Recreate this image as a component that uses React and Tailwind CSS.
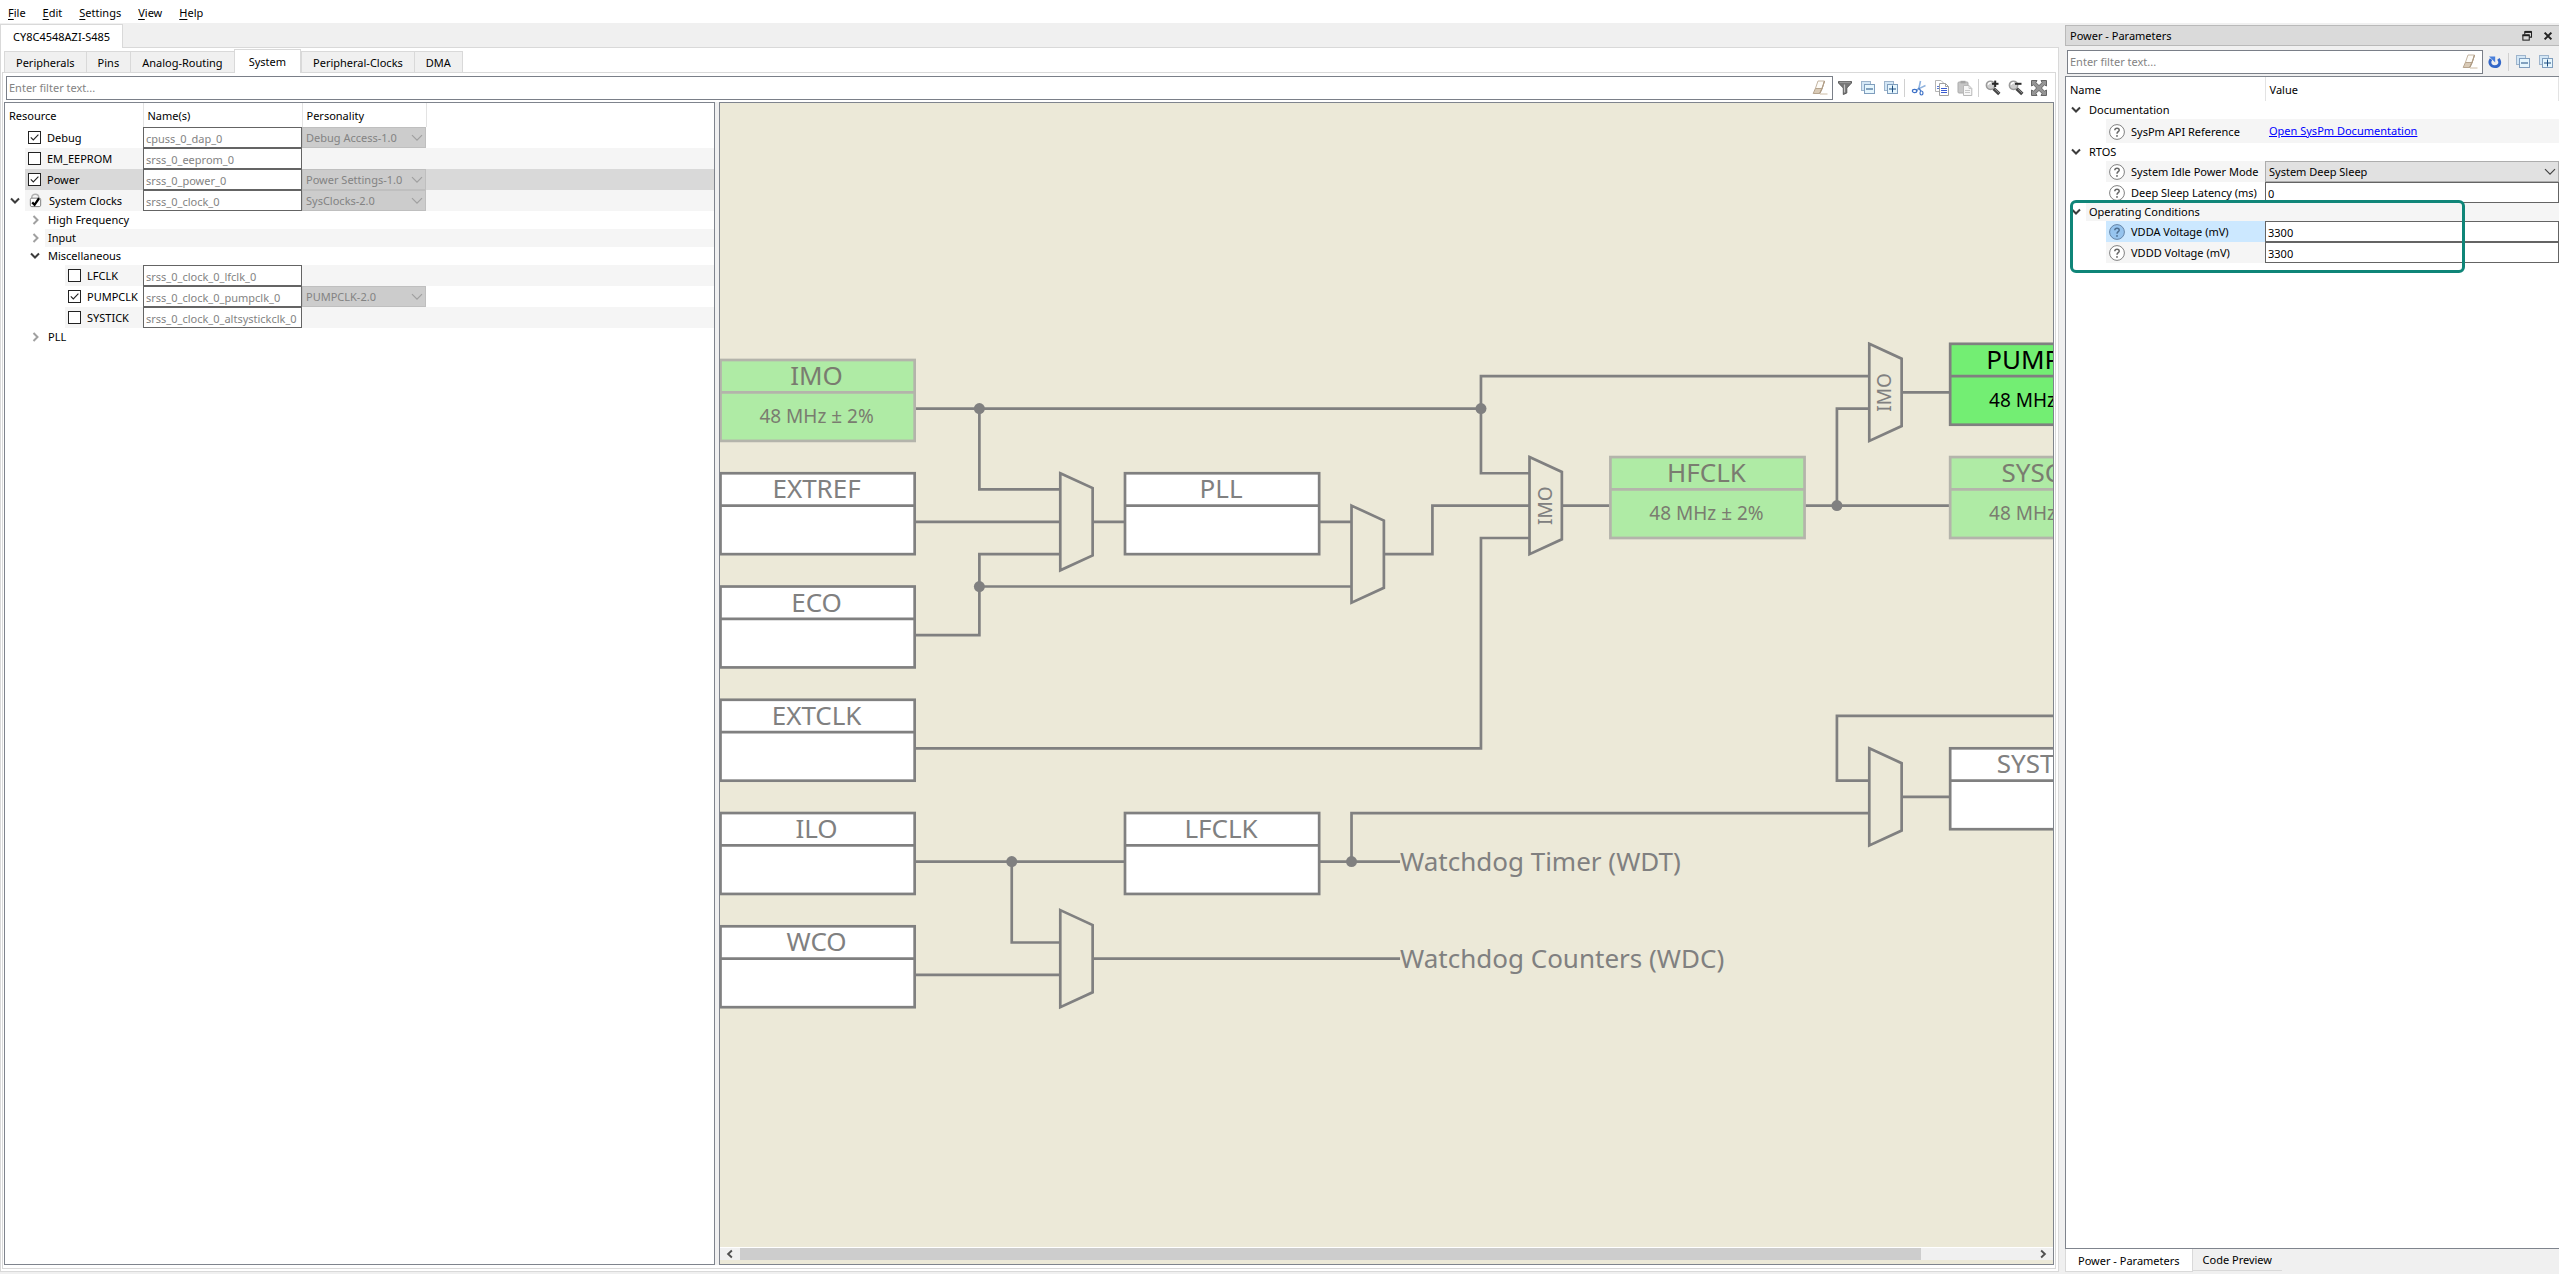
import { useState } from "react";
import clsx from "clsx";

const MENUS = ["File", "Edit", "Settings", "View", "Help"];
const PAGES = ["Peripherals", "Pins", "Analog-Routing", "System", "Peripheral-Clocks", "DMA"];

const RESOURCES = [
  { id: "debug", label: "Debug", checked: true, name: "cpuss_0_dap_0", personality: "Debug Access-1.0" },
  { id: "eeprom", label: "EM_EEPROM", name: "srss_0_eeprom_0" },
  { id: "power", label: "Power", checked: true, name: "srss_0_power_0", personality: "Power Settings-1.0", selected: true },
  { id: "clocks", label: "System Clocks", locked: true, open: true, name: "srss_0_clock_0", personality: "SysClocks-2.0" },
  { id: "hf", label: "High Frequency", group: true },
  { id: "input", label: "Input", group: true },
  { id: "misc", label: "Miscellaneous", group: true, open: true },
  { id: "lfclk", label: "LFCLK", depth: 2, name: "srss_0_clock_0_lfclk_0" },
  { id: "pumpclk", label: "PUMPCLK", depth: 2, checked: true, name: "srss_0_clock_0_pumpclk_0", personality: "PUMPCLK-2.0" },
  { id: "systick", label: "SYSTICK", depth: 2, name: "srss_0_clock_0_altsystickclk_0" },
  { id: "pll", label: "PLL", group: true },
];

const PARAMETERS = [
  { id: "doc", label: "Documentation", group: true },
  { id: "api", label: "SysPm API Reference", link: "Open SysPm Documentation" },
  { id: "rtos", label: "RTOS", group: true },
  { id: "idle", label: "System Idle Power Mode", select: "System Deep Sleep" },
  { id: "latency", label: "Deep Sleep Latency (ms)", value: "0" },
  { id: "cond", label: "Operating Conditions", group: true },
  { id: "vdda", label: "VDDA Voltage (mV)", value: "3300", selected: true },
  { id: "vddd", label: "VDDD Voltage (mV)", value: "3300" },
];

/* ---------- icons ---------- */

function Icon({ children, className = "size-4" }) {
  return (
    <svg viewBox="0 0 16 16" className={clsx("shrink-0", className)} fill="none" aria-hidden="true">
      {children}
    </svg>
  );
}

function TreeArrow({ open }) {
  return (
    <Icon>
      {open ? (
        <path d="M4 5.5L8 9.5L12 5.5" stroke="#3c3c3c" strokeWidth="2" />
      ) : (
        <path d="M6.5 4L10.5 8L6.5 12" stroke="#a0a0a0" strokeWidth="2" />
      )}
    </Icon>
  );
}

function EraserIcon() {
  return (
    <Icon>
      <path d="M6 1H12.5L10.2 8.5H3.4Z" fill="#fdfbf7" stroke="#c4b5a2" />
      <path d="M3.4 8.5H10.2L7.6 13.5H1.2Z" fill="#d9cab6" stroke="#b7a58f" />
      <path d="M7.8 13.5L10.2 8.5L12.5 1L11 5.5Z" stroke="#b09d86" />
      <path d="M8 14H15.5" stroke="#cdbca5" />
    </Icon>
  );
}

function FunnelIcon() {
  return (
    <Icon>
      <path d="M1.5 1.5H14.5V3L9.8 8V13L6.3 14.5V8L1.5 3Z" fill="#777" stroke="#5a5a5a" />
      <path d="M2.5 2.2H13.5" stroke="#a8a8a8" />
      <path d="M7.5 4.5V12.5" stroke="#c4c4c4" strokeWidth="1.2" />
    </Icon>
  );
}

function StackIcon({ plus }) {
  return (
    <Icon>
      <rect x="1.5" y="1.5" width="9" height="9" fill="#d3e6f5" stroke="#9db4cc" />
      <rect x="4.5" y="4.5" width="10" height="9" fill="#e6f6fd" stroke="#7f9dbd" />
      <path d="M6 9H13" stroke="#1c4c80" />
      {plus && <path d="M9.5 5.5V12.5" stroke="#1c4c80" />}
    </Icon>
  );
}

function ScissorsIcon() {
  return (
    <Icon>
      <path d="M9.5 1L8 8L5.5 11" stroke="#8db2e0" strokeWidth="1.6" />
      <path d="M14.5 5.5L8 8.5L5 10.5" stroke="#8fb2dd" strokeWidth="1.4" />
      <path d="M7.5 8L10 11" stroke="#4a7cca" strokeWidth="1.3" />
      <ellipse cx="3.6" cy="11" rx="2.2" ry="1.6" stroke="#3c70c6" strokeWidth="1.2" />
      <ellipse cx="10.5" cy="13" rx="1.5" ry="2" stroke="#3c70c6" strokeWidth="1.2" />
    </Icon>
  );
}

function CopyIcon() {
  return (
    <Icon>
      <path d="M1.5 .5H7L9.5 3V11.5H1.5Z" fill="#fff" stroke="#b5b5b5" />
      <path d="M3 6.5H5M3 8.5H5" stroke="#5577d4" />
      <path d="M5.5 3.5H11.5L14.5 6.5V15.5H5.5Z" fill="#fff" stroke="#a0a0a0" />
      <path d="M11.5 3.5V6.5H14.5" stroke="#a0a0a0" />
      <path d="M7 8.5H13M7 10.5H13M7 12.5H13" stroke="#3a5bd0" />
    </Icon>
  );
}

function PasteIcon() {
  return (
    <Icon>
      <rect x="1" y="2" width="10" height="11" rx="1" fill="#c6c6c6" stroke="#ababab" />
      <rect x="3.5" y=".8" width="5" height="2.6" fill="#a5a5a5" />
      <path d="M6.5 5.5H12L14.8 8.5V15.5H6.5Z" fill="#f7f7f7" stroke="#b8b8b8" />
      <path d="M12 5.5V8.5H14.8M8 10.5H13M8 12.5H13" stroke="#c8c8c8" />
    </Icon>
  );
}

function MagnifierIcon({ plus }) {
  return (
    <Icon>
      <path d="M8.5 8.5L14.3 14" stroke="#444" strokeWidth="3.4" />
      <path d="M9.8 9L14 13" stroke="#8d8d8d" />
      <circle cx="5.5" cy="5.3" r="4.2" fill="#cdcdcd" stroke="#9a9a9a" strokeWidth="1.4" />
      <path d="M3 4.6Q4 2.6 6 2.8" stroke="#fff" strokeWidth="1.4" />
      <path d="M7 3.8H13.5" stroke="#2a2a2a" strokeWidth="2" />
      {plus && <path d="M10.2 .6V7" stroke="#2a2a2a" strokeWidth="2" />}
    </Icon>
  );
}

function FitIcon() {
  return (
    <Icon>
      <path
        d="M.5 .5H6L4.8 2.6L8 5.6L11.2 2.6L10 .5H15.5V6L13.4 4.8L10.4 8L13.4 11.2L15.5 10V15.5H10L11.2 13.4L8 10.4L4.8 13.4L6 15.5H.5V10L2.6 11.2L5.6 8L2.6 4.8L.5 6Z"
        fill="#959595"
        stroke="#666"
      />
    </Icon>
  );
}

function ResetIcon() {
  return (
    <Icon>
      <path d="M4 5.2C1.2 9 4 12.7 8 12.7C12.4 12.7 14.2 8.6 11.4 4.8" stroke="#3468c8" strokeWidth="2.8" />
      <path d="M2 2.4H8.2V8.4Z" fill="#4a80dc" />
    </Icon>
  );
}

function HelpIcon({ active }) {
  return (
    <Icon>
      <circle cx="8" cy="8" r="7.4" fill={active ? "#96c4ee" : "#fff"} stroke={active ? "#6686a8" : "#808080"} />
      <path d="M5.8 6.3C5.8 3.4 10.3 3.5 10.2 6.2C10.1 7.7 8 7.8 8 9.8" stroke={active ? "#4d6f92" : "#666"} strokeWidth="1.5" />
      <circle cx="8" cy="11.9" r=".95" fill={active ? "#4d6f92" : "#666"} />
    </Icon>
  );
}

function LockCheckIcon() {
  return (
    <Icon className="size-[15px]">
      <path d="M4 6.5V5C4 .2 11.5 .2 11.5 5V6.5" stroke="#b0b0b0" strokeWidth="1.5" />
      <rect x="2.5" y="5.5" width="11" height="9" rx="1.5" fill="#fff" stroke="#777" />
      <path d="M4.5 10L7 12.6L11.8 5.6" stroke="#000" strokeWidth="2.4" />
    </Icon>
  );
}

/* ---------- small controls ---------- */

function ToolButton({ label, children }) {
  return (
    <button type="button" aria-label={label} title={label} className="flex h-6 w-[23px] items-center justify-center">
      {children}
    </button>
  );
}

function Separator() {
  return <div className="mx-[2px] h-[18px] w-px bg-[#d0d0d0]" />;
}

function FilterBox({ id }) {
  return (
    <div className="flex h-6 min-w-0 flex-1 items-center border border-[#7a7f88] bg-white pr-1 pl-[2px]">
      <input
        id={id}
        type="text"
        aria-label="Filter"
        placeholder="Enter filter text..."
        className="min-w-0 flex-1 bg-transparent outline-none placeholder:text-[#838383]"
      />
      <button type="button" aria-label="Clear filter" className="flex">
        <EraserIcon />
      </button>
    </div>
  );
}

function CheckBox({ id, defaultChecked }) {
  return (
    <span className="relative mr-[6px] ml-[3px] size-[13px] shrink-0">
      <input
        id={id}
        type="checkbox"
        defaultChecked={defaultChecked}
        className="peer block size-[13px] appearance-none border border-[#222] bg-white"
      />
      <svg
        viewBox="0 0 13 13"
        className="pointer-events-none absolute inset-0 hidden size-[13px] peer-checked:block"
        fill="none"
        aria-hidden="true"
      >
        <path d="M2.8 6.4L5.3 9L10.4 3.6" stroke="#222" strokeWidth="1.1" />
      </svg>
    </span>
  );
}

function Combo({ id, label, value, disabled }) {
  return (
    <div className="relative h-[21px]">
      <select
        id={id}
        aria-label={label}
        disabled={disabled}
        className={clsx(
          "block h-[21px] w-full appearance-none border pl-[3px] outline-none",
          disabled ? "border-[#bfbfbf] bg-[#cccccc] text-[#838383] opacity-100" : "border-[#adadad] bg-[#e1e1e1] text-black"
        )}
      >
        <option>{value}</option>
      </select>
      <svg viewBox="0 0 12 8" className="pointer-events-none absolute top-[7px] right-[3px] h-2 w-3" fill="none" aria-hidden="true">
        <path d="M1 1.2L6 6.2L11 1.2" stroke={disabled ? "#a0a0a0" : "#444"} strokeWidth="1.2" />
      </svg>
    </div>
  );
}

/* ---------- resource tree ---------- */

function ResourceRow({ row, striped }) {
  const bg = row.selected ? "bg-[#d9d9d9]" : striped ? "bg-[#f5f5f5]" : "bg-white";
  return (
    <tr className={row.group ? "h-[18px]" : "h-[21px]"}>
      <td className="p-0">
        <div className={clsx("flex", row.group ? "h-[18px]" : "h-[21px]")}>
          {/* indentation stays white, the stripe starts after it */}
          <div
            className={clsx(
              "flex shrink-0 items-center justify-end pr-[2px]",
              row.depth === 2 ? "w-[60px]" : row.group ? "w-10" : "w-5"
            )}
          >
            {(row.group || row.locked) && <TreeArrow open={row.open} />}
          </div>
          <div className={clsx("flex flex-1 items-center whitespace-nowrap", bg)}>
            {row.group && <span className="pl-[3px]">{row.label}</span>}
            {row.locked && (
              <span className="flex items-center gap-[6px] pl-[3px]">
                <LockCheckIcon />
                {row.label}
              </span>
            )}
            {!row.group && !row.locked && (
              <>
                <CheckBox id={row.id} defaultChecked={row.checked} />
                <label htmlFor={row.id}>{row.label}</label>
              </>
            )}
          </div>
        </div>
      </td>
      <td className={clsx("p-0", bg)}>
        {row.name && (
          <input
            type="text"
            aria-label={`${row.label} name`}
            defaultValue={row.name}
            className="block h-[21px] w-full border border-[#646464] bg-white pt-px pl-[2px] text-[#838383] outline-none"
          />
        )}
      </td>
      <td className={clsx("p-0", bg)}>
        {row.personality && <Combo label={`${row.label} personality`} value={row.personality} disabled />}
      </td>
      <td className={clsx("p-0", bg)} />
    </tr>
  );
}

function ResourceTree() {
  return (
    <div className="w-[711px] shrink-0 border border-[#7f848d] bg-white">
      <table className="w-full table-fixed border-collapse">
        <colgroup>
          <col className="w-[138px]" />
          <col className="w-[159px]" />
          <col className="w-[124px]" />
          <col />
        </colgroup>
        <thead>
          <tr className="h-6 text-left">
            <th className="border-r border-[#e3e3e3] p-0 pt-[2px] pl-1 font-normal">Resource</th>
            <th className="border-r border-[#e3e3e3] p-0 pt-[2px] pl-1 font-normal">Name(s)</th>
            <th className="border-r border-[#e3e3e3] p-0 pt-[2px] pl-1 font-normal">Personality</th>
            <th className="p-0" />
          </tr>
        </thead>
        <tbody>
          {RESOURCES.map((row, i) => (
            <ResourceRow key={row.id} row={row} striped={i % 2 === 1} />
          ))}
        </tbody>
      </table>
    </div>
  );
}

/* ---------- clock diagram ---------- */

// one grid cell of the schematic, and where its first row starts
const CELL = 32.36;
const TOP = 257;
const gx = (n) => n * CELL + 0.5;
const gy = (n) => n * CELL + TOP;

const BLOCKS = [
  { x: 0, y: 0, title: "IMO", value: "48 MHz ± 2%", kind: "on" },
  { x: 0, y: 3.5, title: "EXTREF" },
  { x: 0, y: 7, title: "ECO" },
  { x: 0, y: 10.5, title: "EXTCLK" },
  { x: 0, y: 14, title: "ILO" },
  { x: 0, y: 17.5, title: "WCO" },
  { x: 12.5, y: 3.5, title: "PLL" },
  { x: 12.5, y: 14, title: "LFCLK" },
  { x: 27.5, y: 3, title: "HFCLK", value: "48 MHz ± 2%", kind: "on" },
  { x: 38, y: -0.5, title: "PUMPCLK", value: "48 MHz ± 2%", kind: "active" },
  { x: 38, y: 3, title: "SYSCLK", value: "48 MHz ± 2%", kind: "on" },
  { x: 38, y: 12, title: "SYSTICK" },
];

const MUXES = [
  { x: 10.5, y: 3.5 },
  { x: 19.5, y: 4.5 },
  { x: 25, y: 3, label: "IMO" },
  { x: 35.5, y: -0.5, label: "IMO" },
  { x: 35.5, y: 12 },
  { x: 10.5, y: 17 },
];

const WIRES = [
  [[6, 1.5], [23.5, 1.5]],
  [[8, 1.5], [8, 4], [10.5, 4]],
  [[6, 5], [10.5, 5]],
  [[6, 8.5], [8, 8.5], [8, 6], [10.5, 6]],
  [[8, 7], [19.5, 7]],
  [[11.5, 5], [12.5, 5]],
  [[18.5, 5], [19.5, 5]],
  [[20.5, 6], [22, 6], [22, 4.5], [25, 4.5]],
  [[35.5, 0.5], [23.5, 0.5], [23.5, 3.5], [25, 3.5]],
  [[6, 12], [23.5, 12], [23.5, 5.5], [25, 5.5]],
  [[26, 4.5], [27.5, 4.5]],
  [[33.5, 4.5], [38, 4.5]],
  [[34.5, 4.5], [34.5, 1.5], [35.5, 1.5]],
  [[36.5, 1], [38, 1]],
  [[6, 15.5], [12.5, 15.5]],
  [[9, 15.5], [9, 18], [10.5, 18]],
  [[6, 19], [10.5, 19]],
  [[11.5, 18.5], [21, 18.5]],
  [[18.5, 15.5], [21, 15.5]],
  [[19.5, 15.5], [19.5, 14], [35.5, 14]],
  [[44, 11], [34.5, 11], [34.5, 13], [35.5, 13]],
  [[36.5, 13.5], [38, 13.5]],
];

const NODES = [[8, 1.5], [23.5, 1.5], [8, 7], [34.5, 4.5], [9, 15.5], [19.5, 15.5]];

const KINDS = {
  off: { fill: "#ffffff", stroke: "#808080", text: "#808080" },
  on: { fill: "#afeba5", stroke: "#b4b4ab", text: "#7a7c70" },
  active: { fill: "#73ee73", stroke: "#808080", text: "#000000" },
};

function Block({ x, y, title, value, kind = "off" }) {
  const c = KINDS[kind];
  return (
    <g>
      <rect x={gx(x)} y={gy(y)} width={CELL * 6} height={CELL * 2.5} fill={c.fill} stroke={c.stroke} strokeWidth="2.7" />
      <path d={`M${gx(x)} ${gy(y + 1)}H${gx(x + 6)}`} stroke={c.stroke} strokeWidth="2.7" />
      <text x={gx(x + 3) - 1} y={gy(y) + 25} textAnchor="middle" fill={c.text} className="text-[26px]">
        {title}
      </text>
      {value && (
        <text x={gx(x + 3) - 1} y={gy(y) + 63} textAnchor="middle" fill={c.text} className="text-[19px]">
          {value}
        </text>
      )}
    </g>
  );
}

function Mux({ x, y, label }) {
  const cx = gx(x + 0.5) + 6;
  const cy = gy(y + 1.5);
  return (
    <g>
      <path
        d={`M${gx(x)} ${gy(y)}L${gx(x + 1)} ${gy(y + 0.46)}V${gy(y + 2.54)}L${gx(x)} ${gy(y + 3)}Z`}
        stroke="#808080"
        strokeWidth="2.7"
        fill="none"
      />
      {label && (
        <text x={cx} y={cy} transform={`rotate(-90 ${cx} ${cy})`} textAnchor="middle" fill="#808080" className="text-[19px]">
          {label}
        </text>
      )}
    </g>
  );
}

function ClockDiagram() {
  return (
    <div className="flex min-w-0 flex-1 flex-col border border-[#7f848d] bg-[#ece9d8] pb-1">
      <div className="min-h-0 flex-1 overflow-hidden">
        <svg className="h-full w-full" role="img" aria-label="Clock diagram">
          {WIRES.map((w, i) => (
            <polyline
              key={i}
              points={w.map(([x, y]) => `${gx(x)},${gy(y)}`).join(" ")}
              fill="none"
              stroke="#808080"
              strokeWidth="2.7"
            />
          ))}
          {MUXES.map((m, i) => (
            <Mux key={i} {...m} />
          ))}
          {BLOCKS.map((b) => (
            <Block key={b.title} {...b} />
          ))}
          {NODES.map(([x, y], i) => (
            <circle key={i} cx={gx(x)} cy={gy(y)} r="5.5" fill="#808080" />
          ))}
          <text x={gx(21)} y={gy(15.5) + 9} fill="#808080" className="text-[26px]">
            Watchdog Timer (WDT)
          </text>
          <text x={gx(21)} y={gy(18.5) + 9} fill="#808080" className="text-[26px]">
            Watchdog Counters (WDC)
          </text>
        </svg>
      </div>
      {/* horizontal scrollbar */}
      <div className="flex h-[13px] shrink-0 border-t border-white bg-[#f0f0f0]">
        <button type="button" aria-label="Scroll left" className="flex w-5 items-center justify-center">
          <Icon className="size-[10px]">
            <path d="M11 2.5L5 8L11 13.5" stroke="#505050" strokeWidth="3" />
          </Icon>
        </button>
        <div className="flex flex-1">
          <div className="flex-[21] bg-[#cdcdcd]" />
          <div className="flex-[2]" />
        </div>
        <button type="button" aria-label="Scroll right" className="flex w-5 items-center justify-center">
          <Icon className="size-[10px]">
            <path d="M5 2.5L11 8L5 13.5" stroke="#505050" strokeWidth="3" />
          </Icon>
        </button>
      </div>
    </div>
  );
}

/* ---------- parameters dock ---------- */

function ParameterRow({ row, striped }) {
  const stripe = striped ? "bg-[#f5f5f5]" : "bg-white";
  const height = row.group ? "h-[18px]" : row.link ? "h-6" : "h-[21px]";
  return (
    <tr className={height}>
      <td className="p-0" colSpan={row.group ? 2 : 1}>
        <div className={clsx("flex", height)}>
          <div className={clsx("flex shrink-0 items-center pl-[2px]", row.group ? "w-5" : "w-10")}>
            {row.group && <TreeArrow open />}
          </div>
          <div className={clsx("flex flex-1 items-center whitespace-nowrap", row.selected ? "bg-[#cce8ff]" : stripe)}>
            {row.group ? (
              <span className="pl-[3px]">{row.label}</span>
            ) : (
              <label htmlFor={row.id} className="flex items-center gap-[6px] pt-px pl-[3px]">
                <HelpIcon active={row.selected} />
                {row.label}
              </label>
            )}
          </div>
        </div>
      </td>
      {!row.group && (
        <td className={clsx("p-0", stripe)}>
          {row.link && (
            <a id={row.id} href="#syspm" className="pl-1 text-[#0000ff] underline">
              {row.link}
            </a>
          )}
          {row.select && <Combo id={row.id} label={row.label} value={row.select} />}
          {row.value && (
            <input
              id={row.id}
              type="text"
              defaultValue={row.value}
              className="block h-[21px] w-full border border-[#646464] bg-white pt-px pl-[2px] outline-none"
            />
          )}
        </td>
      )}
    </tr>
  );
}

function ParametersDock() {
  return (
    <aside className="flex w-[494px] shrink-0 flex-col pt-px">
      <div className="flex h-[21px] items-center border border-r-0 border-[#b9b9b9] bg-[#dadada] pl-1">
        <h2 className="flex-1">Power - Parameters</h2>
        <button type="button" aria-label="Float" className="mr-[9px] flex">
          <Icon className="size-3">
            <path d="M5 6V2.5H14V9.5H11" stroke="#222" strokeWidth="1.4" />
            <path d="M5 2.5H14" stroke="#222" strokeWidth="2.6" />
            <rect x="2.5" y="7" width="8.5" height="6.5" stroke="#222" strokeWidth="1.4" />
            <path d="M2 7H11.5" stroke="#222" strokeWidth="2.6" />
          </Icon>
        </button>
        <button type="button" aria-label="Close" className="mr-[5px] flex">
          <Icon className="size-3">
            <path d="M3.5 3.5L12.5 12.5M12.5 3.5L3.5 12.5" stroke="#222" strokeWidth="2.8" />
          </Icon>
        </button>
      </div>

      <div className="mt-1 mb-[2px] flex items-center pr-[2px] pl-[2px]">
        <FilterBox id="parameter-filter" />
        <ToolButton label="Reset">
          <ResetIcon />
        </ToolButton>
        <Separator />
        <ToolButton label="Collapse all">
          <StackIcon />
        </ToolButton>
        <ToolButton label="Expand all">
          <StackIcon plus />
        </ToolButton>
      </div>

      <div className="relative flex-1 border border-r-0 border-[#7f848d] bg-white">
        <table className="w-full table-fixed border-collapse">
          <colgroup>
            <col className="w-[199px]" />
            <col />
          </colgroup>
          <thead>
            <tr className="h-6 text-left">
              <th className="border-r border-[#e3e3e3] p-0 pt-[2px] pl-1 font-normal">Name</th>
              <th className="border-r border-[#e3e3e3] p-0 pt-[2px] pl-1 font-normal">Value</th>
            </tr>
          </thead>
          <tbody>
            {PARAMETERS.map((row, i) => (
              <ParameterRow key={row.id} row={row} striped={i % 2 === 1} />
            ))}
          </tbody>
        </table>
        {/* highlight around the operating conditions */}
        <div className="pointer-events-none absolute top-[123px] left-1 h-[73px] w-[395px] rounded-md border-3 border-[#0f8578]" />
      </div>

      <div className="flex h-[23px] shrink-0 items-start">
        <button type="button" className="h-[23px] border border-t-0 border-[#d9d9d9] bg-white px-3 pt-[2px]">
          Power - Parameters
        </button>
        <button type="button" className="h-[22px] border-b border-[#d9d9d9] px-[10px] pt-px">
          Code Preview
        </button>
      </div>
    </aside>
  );
}

export default function App() {
  const [page, setPage] = useState("System");

  return (
    <div className="flex h-screen flex-col overflow-hidden bg-[#f0f0f0] font-['Noto_Sans','Open_Sans',sans-serif] text-[11px] leading-4 text-black">
      <nav className="flex h-[23px] shrink-0 items-center gap-[17px] bg-white pt-[2px] pl-2">
        {MENUS.map((m) => (
          <button key={m} type="button">
            <span className="underline underline-offset-2">{m[0]}</span>
            {m.slice(1)}
          </button>
        ))}
      </nav>

      <div className="flex min-h-0 flex-1 gap-[6px] pt-px pb-[2px]">
        <main className="flex min-w-0 flex-1 flex-col">
          {/* device tab */}
          <div className="flex h-[23px] shrink-0">
            <button type="button" className="z-10 -mb-px h-6 border border-b-0 border-[#d9d9d9] bg-white px-3">
              CY8C4548AZI-S485
            </button>
          </div>

          <div className="flex min-h-0 flex-1 flex-col border border-[#d9d9d9] bg-white pt-px pr-[2px] pb-[2px] pl-px">
            {/* page tabs */}
            <div className="flex h-[23px] shrink-0 items-end pl-[2px]">
              {PAGES.map((p) => (
                <button
                  key={p}
                  type="button"
                  onClick={() => setPage(p)}
                  className={clsx(
                    "border border-b-0 border-[#d9d9d9]",
                    p === page ? "z-10 -mb-px h-6 bg-white px-[14px]" : "-mr-px h-[21px] bg-[#f0f0f0] px-[11px] pt-px"
                  )}
                >
                  {p}
                </button>
              ))}
            </div>

            <div className="flex min-h-0 flex-1 flex-col border border-[#d9d9d9] px-px pt-[3px] pb-[3px]">
              <div className="mb-[2px] flex items-center pr-1 pl-[2px]">
                <FilterBox id="resource-filter" />
                <ToolButton label="Filter">
                  <FunnelIcon />
                </ToolButton>
                <ToolButton label="Collapse all">
                  <StackIcon />
                </ToolButton>
                <ToolButton label="Expand all">
                  <StackIcon plus />
                </ToolButton>
                <Separator />
                <ToolButton label="Cut">
                  <ScissorsIcon />
                </ToolButton>
                <ToolButton label="Copy">
                  <CopyIcon />
                </ToolButton>
                <ToolButton label="Paste">
                  <PasteIcon />
                </ToolButton>
                <Separator />
                <ToolButton label="Zoom in">
                  <MagnifierIcon plus />
                </ToolButton>
                <ToolButton label="Zoom out">
                  <MagnifierIcon />
                </ToolButton>
                <ToolButton label="Zoom to fit">
                  <FitIcon />
                </ToolButton>
              </div>

              <div className="flex min-h-0 flex-1">
                <ResourceTree />
                <div className="w-1 shrink-0 bg-[#f0f0f0]" />
                <ClockDiagram />
              </div>
            </div>
          </div>
        </main>

        <ParametersDock />
      </div>
    </div>
  );
}
